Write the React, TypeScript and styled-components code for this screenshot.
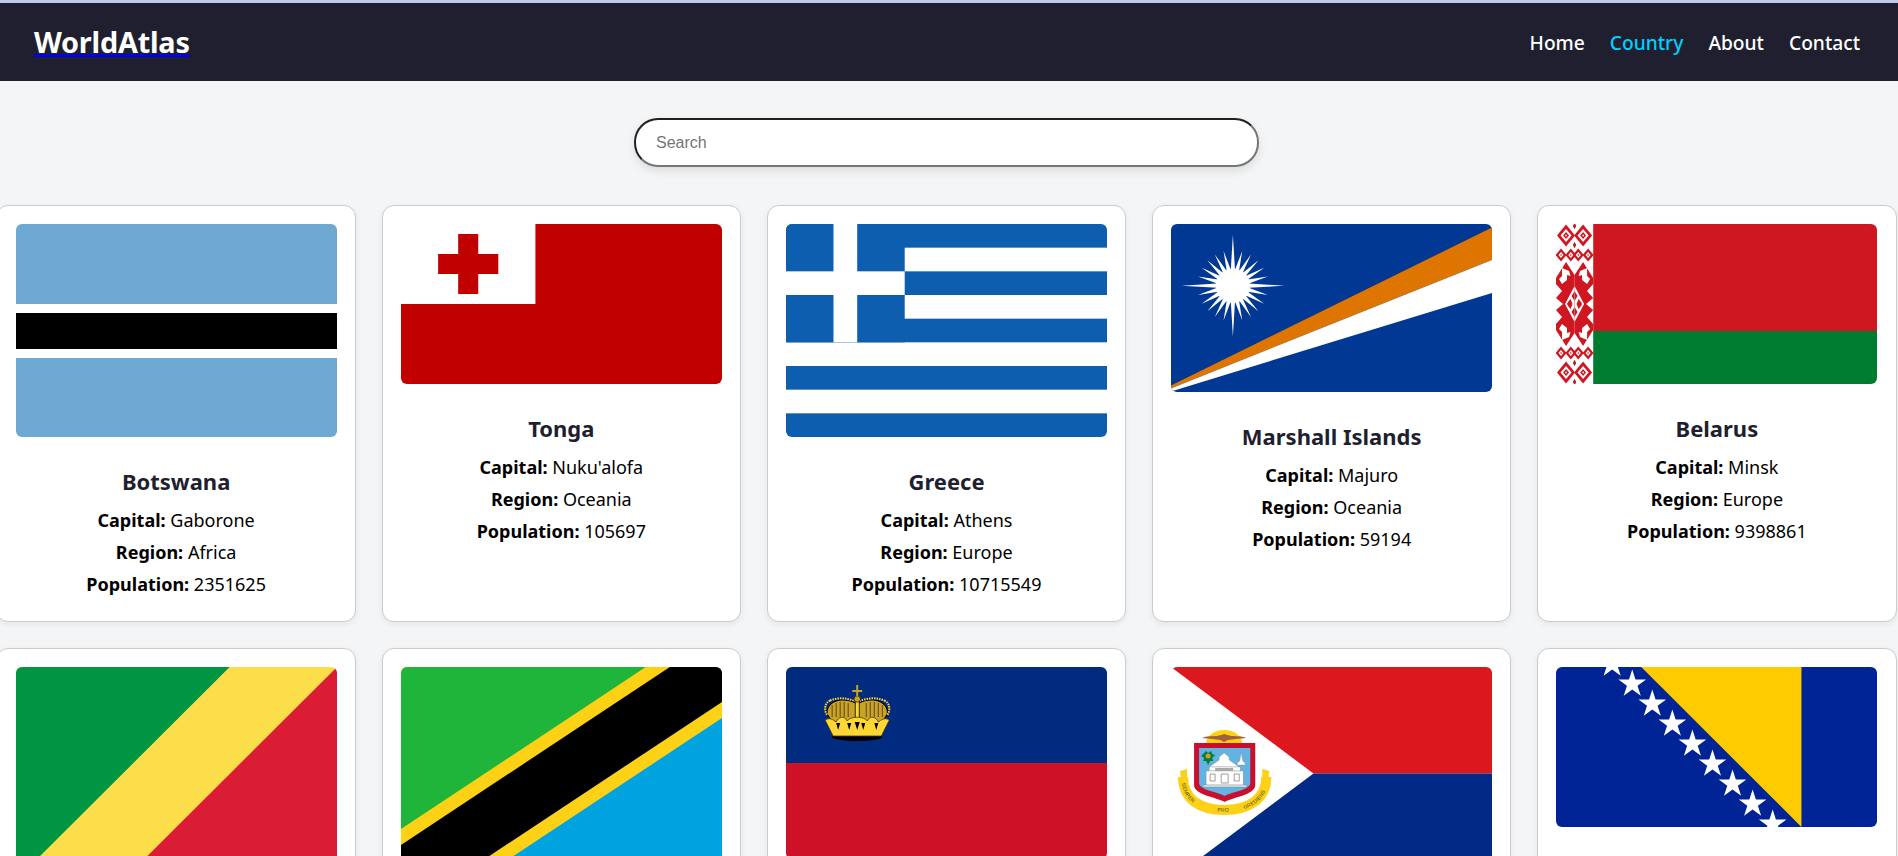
import styled, { createGlobalStyle } from 'styled-components';
import type { ReactNode } from 'react';

const GlobalStyle = createGlobalStyle`
  html, body {
    margin: 0;
    height: 856px;
    overflow: hidden;
    background: #f4f5f7;
    font-family: "Noto Sans", "Open Sans", sans-serif;
  }
`;

const TopStrip = styled.div`
  height: 3px;
  background: #b9cde6;
`;

const NavBar = styled.header`
  height: 78px;
  display: flex;
  align-items: center;
  justify-content: space-between;
  padding: 0 38px 0 34px;
  background: #1f1f30;
`;

const Logo = styled.a`
  font-size: 28.8px;
  font-weight: 700;
  line-height: 36px;
  letter-spacing: -0.2px;
  color: #fff;
  text-decoration: underline;
  text-decoration-color: #0000ee;
  text-decoration-thickness: 3px;
  text-underline-offset: 1px;
`;

const NavLinks = styled.nav`
  display: flex;
  gap: 25px;
`;

const NavLink = styled.a<{ $active?: boolean }>`
  font-size: 19.2px;
  font-weight: 500;
  color: ${(p) => (p.$active ? '#00cfff' : '#fff')};
`;

const Main = styled.main`
  width: 1893px;
`;

const SearchRow = styled.div`
  display: flex;
  justify-content: center;
  padding: 37px 0 38px;
`;

const SearchInput = styled.input`
  box-sizing: border-box;
  width: 625px;
  height: 49px;
  padding: 0 20px;
  border: 2px inset #767676;
  border-radius: 24px;
  background: #fff;
  box-shadow: 0 4px 10px rgba(0, 0, 0, 0.1);
  font-family: "Liberation Sans", Arial, sans-serif;
  font-size: 16px;
  &::placeholder {
    color: #757575;
  }
`;

const CountryGrid = styled.section`
  display: grid;
  grid-template-columns: repeat(5, 359.6px);
  justify-content: center;
  gap: 26.5px 25.6px;
`;

const Card = styled.article`
  box-sizing: border-box;
  display: flex;
  flex-direction: column;
  align-items: center;
  padding: 18px 0 20.5px;
  border: 1px solid #ccc;
  border-radius: 12px;
  background: #fff;
  box-shadow: 0 2px 6px rgba(0, 0, 0, 0.07);
  text-align: center;
`;

const FlagImage = styled.svg`
  display: block;
  flex: none;
  border-radius: 6px;
`;

const CountryName = styled.h3`
  margin: 29px 0 8px;
  font-size: 22px;
  font-weight: 700;
  line-height: 30px;
  color: #1f1f30;
`;

const InfoLine = styled.p`
  margin: 0;
  font-size: 18px;
  line-height: 32px;
  color: #000;
  b {
    font-weight: 700;
  }
`;

const star = (cx: number, cy: number, r: number) => {
  const pts: string[] = [];
  for (let i = 0; i < 10; i++) {
    const radius = i % 2 === 0 ? r : r * 0.382;
    const a = (Math.PI / 5) * i - Math.PI / 2;
    pts.push(`${(cx + radius * Math.cos(a)).toFixed(2)},${(cy + radius * Math.sin(a)).toFixed(2)}`);
  }
  return pts.join(' ');
};

const sunPath = (cx: number, cy: number) => {
  let d = '';
  for (let i = 0; i < 24; i++) {
    const a = (Math.PI / 12) * i;
    const r = i % 6 === 0 ? 51 : 36;
    const spread = Math.PI / 24;
    const pt = (rad: number, ang: number) =>
      `${(cx + rad * Math.cos(ang)).toFixed(2)} ${(cy + rad * Math.sin(ang)).toFixed(2)}`;
    d += `M${pt(16, a - spread)}L${pt(r, a)}L${pt(16, a + spread)}Z`;
  }
  return d;
};

const diamond = (cx: number, cy: number, rx: number, ry: number) =>
  `M${cx} ${cy - ry}L${cx + rx} ${cy}L${cx} ${cy + ry}L${cx - rx} ${cy}Z`;

const Botswana = () => (
  <>
    <rect width="320" height="213" fill="#6da9d2" />
    <rect y="80" width="320" height="54" fill="#fff" />
    <rect y="89" width="320" height="36" fill="#000" />
  </>
);

const Tonga = () => (
  <>
    <rect width="134" height="80" fill="#fff" />
    <path d="M134 0H320V160H0V80H134z" fill="#c10000" />
    <path d="M57 10h20v20h20v20h-20v20h-20v-20h-20v-20h20z" fill="#c10000" />
  </>
);

const Greece = () => {
  const h = 213 / 9;
  return (
    <>
      <rect width="320" height="213" fill="#0d5eaf" />
      {[1, 3, 5, 7].map((i) => (
        <rect key={i} y={h * i} width="320" height={h} fill="#fff" />
      ))}
      <rect width={h * 5} height={h * 5} fill="#0d5eaf" />
      <rect x={h * 2} width={h} height={h * 5} fill="#fff" />
      <rect y={h * 2} width={h * 5} height={h} fill="#fff" />
    </>
  );
};

const Marshall = () => (
  <>
    <rect width="320" height="168" fill="#003893" />
    <path d="M0 161.500L320 3.500V36L0 164.500z" fill="#dd7500" />
    <path d="M0 164.500L320 36V69L0 167.500z" fill="#fff" />
    <path d={sunPath(61.7, 61.7)} fill="#fff" />
    <circle cx="61.7" cy="61.7" r="17" fill="#fff" />
  </>
);

const BELARUS_RED = '#ce1720';

const BelarusSide = () => (
  <>
    {/* top diamonds */}
    <path d={diamond(10, 11.5, 9, 11)} fill={BELARUS_RED} />
    <path d={diamond(10, 11.5, 5.5, 6.5)} fill="#fff" />
    <path d={diamond(10, 11.5, 3, 3.5)} fill={BELARUS_RED} />
    <path d={diamond(10, 11.5, 1, 1.2)} fill="#fff" />
    <path d={diamond(18.5, 2, 1.5, 3)} fill={BELARUS_RED} />
    <path d={diamond(18.5, 21, 1.5, 3)} fill={BELARUS_RED} />
    {/* small row */}
    <path d={diamond(5, 31, 5.5, 6.5)} fill={BELARUS_RED} />
    <path d={diamond(5, 31, 2.5, 3)} fill="#fff" />
    <path d={diamond(5, 31, 0.9, 1.1)} fill={BELARUS_RED} />
    <path d={diamond(14.8, 31, 5.5, 6.5)} fill={BELARUS_RED} />
    <path d={diamond(14.8, 31, 2.5, 3)} fill="#fff" />
    <path d={diamond(14.8, 31, 0.9, 1.1)} fill={BELARUS_RED} />
    {/* chevron with hook and side wedges */}
    <path d="M0 54L10 38L18.500 51V80H0z" fill={BELARUS_RED} />
    <path d="M6 44L13 47L14.500 52L11 51L11 56L6 60L3 55L6 52z" fill="#fff" />
    <path d="M0 60L6 67L0 74zM0 74L7 80H0z" fill="#fff" />
    <path d="M18.500 62V80H9z" fill="#fff" />
    <path d="M18.500 67V77L15.500 72z" fill={BELARUS_RED} />
    <path d="M12 78L14.500 75L16.500 80H11z" fill={BELARUS_RED} />
  </>
);

const BelarusQuadrants = () => (
  <>
    <BelarusSide />
    <g transform="translate(37 0) scale(-1 1)">
      <BelarusSide />
    </g>
  </>
);

const Belarus = () => (
  <>
    <rect x="37" width="283" height="107" fill={BELARUS_RED} />
    <rect x="37" y="107" width="283" height="53" fill="#007c30" />
    <rect width="37" height="160" fill="#fff" />
    <BelarusQuadrants />
    <g transform="translate(0 160) scale(1 -1)">
      <BelarusQuadrants />
    </g>
  </>
);

const Congo = () => (
  <>
    <rect width="320" height="213" fill="#fbde4a" />
    <path d="M0 0H213L0 213z" fill="#009543" />
    <path d="M320 0V213H107z" fill="#db1c35" />
  </>
);

const Tanzania = () => (
  <>
    <rect width="320" height="213" fill="#fcd116" />
    <path d="M0 0H244L0 162z" fill="#1eb53a" />
    <path d="M320 51V213H76z" fill="#00a3dd" />
    <path d="M268 0H320V35L52 213H0V178z" fill="#000" />
  </>
);

const Liechtenstein = () => (
  <>
    <rect width="320" height="96" fill="#002b7f" />
    <rect y="96" width="320" height="96" fill="#ce1126" />
    <ellipse cx="71" cy="70" rx="25" ry="4" fill="#000" />
    <path d="M41 47C40 38 48 33 56 33C63 33 68 35 71 37C74 35 79 33 86 33C94 33 102 38 101 47L96 55H46z" fill="#c9a227" stroke="#000" strokeWidth="1" />
    <path d="M46 38V50M50 36V50M54 35V50M58 35V50M62 36V50M80 36V50M84 35V50M88 35V50M92 36V50M96 38V50" stroke="#5c4a10" strokeWidth="1" />
    <path d="M44 33.500C38 36 38 44 41 48M98 33.500C104 36 104 44 101 48M44 33.500C52 30 62 31 71 35C80 31 90 30 98 33.500" fill="none" stroke="#fdd835" strokeWidth="2" strokeDasharray="1.500 1" />
    <rect x="69" y="34" width="4" height="18" fill="#fdd835" stroke="#000" strokeWidth="0.8" />
    <circle cx="71" cy="32" r="3.200" fill="#c9a227" stroke="#000" strokeWidth="0.6" />
    <path d="M71 18V29M66 24H76" stroke="#c9a227" strokeWidth="2" />
    <path d="M39 53C44 50 47 53 50 55C52 50 58 48 61 54C64 49 78 49 81 54C84 48 90 50 92 55C95 53 98 50 103 53L95 69H47z" fill="#fdd835" stroke="#4a3c0c" strokeWidth="0.8" />
    <path d="M50 56l2 7l2-7zM61 56l2 7l2-7zM71 55l-2.500 0l2.500 8l2.500-8zM79 56l-2 7l-2-7zM92 56l-2 7l-2-7z" fill="#000" />
  </>
);

const SintMaarten = () => (
  <>
    <path d="M0 0L142 106.500L0 213z" fill="#fff" />
    <path d="M0 0H320V106.500H142z" fill="#dc171d" />
    <path d="M142 106.500H320V213H0z" fill="#012a87" />
    <path d="M35 77A18 14 0 0 1 71 77z" fill="#fdd20e" />
    <path d="M31 71C38 68 44 70 50 68L53 67L56 68C62 70 68 68 75 71C68 72 62 72 57 73L53 75L49 73C44 72 38 72 31 71z" fill="#a4603c" />
    <path d="M23 76H84V118C84 128 62 130 53.500 135C45 130 23 128 23 118z" fill="#c8102e" />
    <path d="M28 81H79V116C79 123 60 125 53.500 129C47 125 28 123 28 116z" fill="#62b2e3" />
    <path d="M32 87l3-3l2 2l3-2l1 3l3 1l-3 3l1 3l-3 0l-2 4l-2-4l-3 0l1-3l-3-2z" fill="#0b7a3b" />
    <circle cx="37" cy="89" r="2.500" fill="#c9a227" />
    <path d="M70 85l1.500 9l2.500 2v2h-8v-2l2.500-2z" fill="#fff" stroke="#8a8a8a" strokeWidth="0.4" />
    <path d="M53 86l5 4v3l10 7H38l10-7v-3z" fill="#fff" stroke="#8a8a8a" strokeWidth="0.4" />
    <rect x="38" y="100" width="31" height="4" fill="#fff" stroke="#8a8a8a" strokeWidth="0.4" />
    <rect x="35" y="104" width="37" height="14" fill="#fff" stroke="#8a8a8a" strokeWidth="0.4" />
    <path d="M39 107h5v7h-5zM63 107h5v7h-5zM50 107h7v9h-7z" fill="none" stroke="#777" strokeWidth="0.7" />
    <rect x="44" y="101" width="18" height="3" fill="#a9a9a9" />
    <rect x="32" y="118" width="43" height="2" fill="#dfe3e6" stroke="#777" strokeWidth="0.3" />
    <path id="sxm-ribbon" d="M12 110C12 133 30 143 53 143C76 143 95 133 95 110" fill="none" stroke="#fcd116" strokeWidth="10" />
    <path d="M9 104l7-2v8l-6 2zM98 104l-7-2v8l6 2z" fill="#fcd116" />
    <text fontFamily="'Liberation Sans', sans-serif" fontSize="5.200" fill="#4a4a20" dy="1.800">
      <textPath href="#sxm-ribbon" startOffset="5%">SEMPER</textPath>
    </text>
    <text fontFamily="'Liberation Sans', sans-serif" fontSize="5.200" fill="#4a4a20" dy="1.800">
      <textPath href="#sxm-ribbon" startOffset="44%">PRO</textPath>
    </text>
    <text fontFamily="'Liberation Sans', sans-serif" fontSize="5.200" fill="#4a4a20" dy="1.800">
      <textPath href="#sxm-ribbon" startOffset="66%">GREDIENS</textPath>
    </text>
  </>
);

const Bosnia = () => (
  <>
    <rect width="320" height="160" fill="#002395" />
    <path d="M85 0H244.700V160z" fill="#fecb00" />
    {[0, 1, 2, 3, 4, 5, 6, 7, 8].map((i) => (
      <polygon key={i} points={star(56 + 20 * i, -3 + 20 * i, 14.5)} fill="#fff" />
    ))}
  </>
);

type Country = {
  name: string;
  capital: string;
  region: string;
  population: number;
  flagHeight: number;
  flag: ReactNode;
};

const countries: Country[] = [
  { name: 'Botswana', capital: 'Gaborone', region: 'Africa', population: 2351625, flagHeight: 213, flag: <Botswana /> },
  { name: 'Tonga', capital: "Nuku'alofa", region: 'Oceania', population: 105697, flagHeight: 160, flag: <Tonga /> },
  { name: 'Greece', capital: 'Athens', region: 'Europe', population: 10715549, flagHeight: 213, flag: <Greece /> },
  { name: 'Marshall Islands', capital: 'Majuro', region: 'Oceania', population: 59194, flagHeight: 168, flag: <Marshall /> },
  { name: 'Belarus', capital: 'Minsk', region: 'Europe', population: 9398861, flagHeight: 160, flag: <Belarus /> },
  { name: 'Republic of the Congo', capital: 'Brazzaville', region: 'Africa', population: 5518092, flagHeight: 213, flag: <Congo /> },
  { name: 'Tanzania', capital: 'Dodoma', region: 'Africa', population: 59734213, flagHeight: 213, flag: <Tanzania /> },
  { name: 'Liechtenstein', capital: 'Vaduz', region: 'Europe', population: 38137, flagHeight: 192, flag: <Liechtenstein /> },
  { name: 'Sint Maarten', capital: 'Philipsburg', region: 'Americas', population: 40812, flagHeight: 213, flag: <SintMaarten /> },
  { name: 'Bosnia and Herzegovina', capital: 'Sarajevo', region: 'Europe', population: 3280815, flagHeight: 160, flag: <Bosnia /> },
];

const App = () => {
  return (
    <>
      <GlobalStyle />
      <TopStrip />
      <NavBar>
        <Logo href="#">WorldAtlas</Logo>
        <NavLinks>
          <NavLink>Home</NavLink>
          <NavLink $active>Country</NavLink>
          <NavLink>About</NavLink>
          <NavLink>Contact</NavLink>
        </NavLinks>
      </NavBar>
      <Main>
        <SearchRow>
          <SearchInput type="text" placeholder="Search" />
        </SearchRow>
        <CountryGrid>
          {countries.map((c) => (
            <Card key={c.name}>
              <FlagImage
                width="321"
                height={c.flagHeight}
                viewBox={`0 0 320 ${c.flagHeight}`}
                preserveAspectRatio="none"
              >
                {c.flag}
              </FlagImage>
              <CountryName>{c.name}</CountryName>
              <InfoLine><b>Capital:</b> {c.capital}</InfoLine>
              <InfoLine><b>Region:</b> {c.region}</InfoLine>
              <InfoLine><b>Population:</b> {c.population}</InfoLine>
            </Card>
          ))}
        </CountryGrid>
      </Main>
    </>
  );
};

export default App;
